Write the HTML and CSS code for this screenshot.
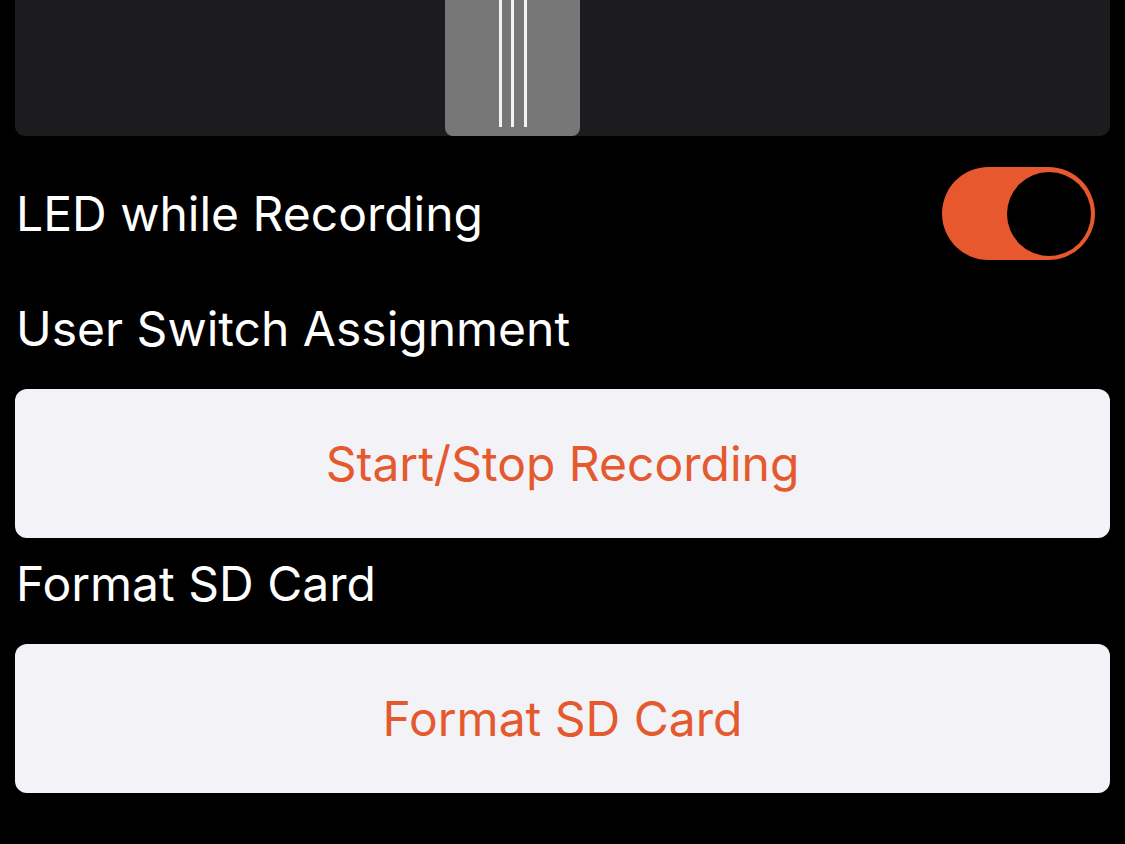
FILE: index.html
```html
<!DOCTYPE html>
<html>
<head>
<meta charset="utf-8">
<link rel="stylesheet" href="styles.css">
</head>
<body>
<div class="screen">
  <div class="slider-card">
    <div class="thumb">
      <span class="grip"></span><span class="grip"></span><span class="grip"></span>
    </div>
  </div>
  <div class="toggle-row">
    <span class="row-label">LED while Recording</span>
    <div class="toggle"><div class="knob"></div></div>
  </div>
  <div class="section-label first">User Switch Assignment</div>
  <div class="action-button">Start/Stop Recording</div>
  <div class="section-label">Format SD Card</div>
  <div class="action-button">Format SD Card</div>
</div>
</body>
</html>
```
FILE: styles.css
```css
html, body {
  margin: 0;
  padding: 0;
  background: #000;
}
body {
  font-family: Inter, "Noto Sans", "Liberation Sans", sans-serif;
  color: #fff;
  width: 1125px;
  height: 844px;
  overflow: hidden;
}
.screen {
  display: flex;
  flex-direction: column;
  padding: 0 15px;
}
.slider-card {
  height: 136px;
  background: #1c1c1e;
  border-radius: 0 0 10px 10px;
  display: flex;
  padding-left: 430px;
}
.thumb {
  width: 135px;
  height: 136px;
  background: #777777;
  border-radius: 0 0 8px 8px;
  display: flex;
  justify-content: center;
  gap: 9.5px;
}
.grip {
  width: 3px;
  height: 127px;
  background: #f4f4f4;
}
.toggle-row {
  margin-top: 31px;
  height: 93px;
  display: flex;
  align-items: center;
  justify-content: space-between;
}
.row-label {
  font-size: 48px;
  padding-left: 1px;
}
.toggle {
  width: 153px;
  height: 93px;
  border-radius: 47px;
  background: #e8582e;
  margin-right: 15px;
  display: flex;
  align-items: center;
  justify-content: flex-end;
  padding-right: 4px;
  box-sizing: border-box;
}
.knob {
  width: 84px;
  height: 84px;
  border-radius: 50%;
  background: #000;
}
.section-label {
  font-size: 48px;
  height: 106px;
  line-height: 92px;
  padding-left: 1px;
}
.section-label.first {
  height: 129px;
  line-height: 138px;
}
.action-button {
  height: 149px;
  background: #f2f2f7;
  border-radius: 12px;
  display: flex;
  align-items: center;
  justify-content: center;
  color: #e5592f;
  font-size: 48px;
}
```
